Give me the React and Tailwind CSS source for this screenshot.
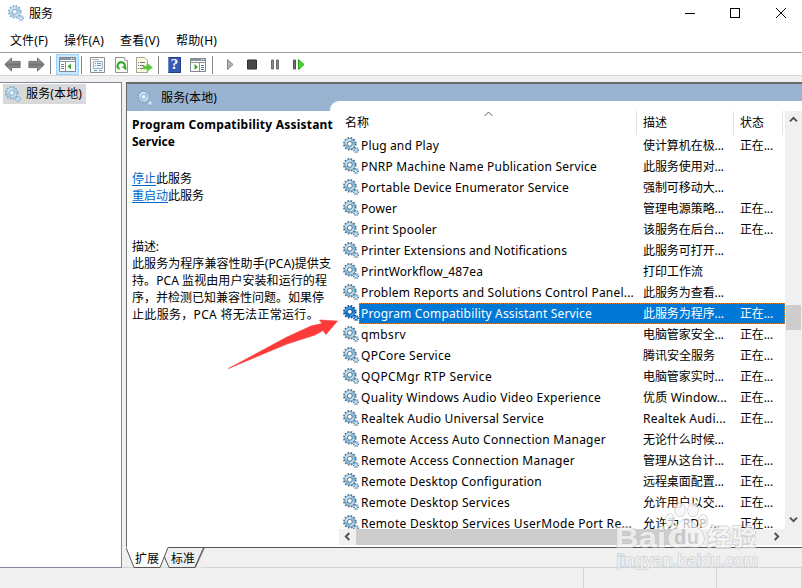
import { useLayoutEffect, useRef, useState } from "react";

// Text whose tracking is adjusted so that the run takes the given width.
function Fit({ w, children, className = "" }) {
  const ref = useRef(null);
  const [spacing, setSpacing] = useState(0);
  useLayoutEffect(() => {
    const natural = ref.current.getBoundingClientRect().width;
    setSpacing((w - natural) / String(children).length);
  }, [w, children]);
  return (
    <span ref={ref} className={`inline-block shrink-0 whitespace-pre ${className}`} style={{ letterSpacing: spacing }}>
      {children}
    </span>
  );
}

function Gear({ selected = false, pale = false }) {
  const main = selected ? "#1c78cc" : pale ? "#a9cfe8" : "#8dbbd9";
  const edge = selected ? "#0a4f94" : pale ? "#7fa9c6" : "#4f7690";
  const light = selected ? "#3f9be6" : pale ? "#cfe5f4" : "#c6e2f3";
  return (
    <svg width="16" height="16" viewBox="0 0 16 16" className="block shrink-0">
      <circle cx="6.8" cy="6.8" r="5.9" fill="none" stroke={edge} strokeWidth="1.8" strokeDasharray="1.7 1.39" />
      <circle cx="6.8" cy="6.8" r="5.2" fill={main} stroke={edge} strokeWidth={pale ? 0.3 : 0.5} />
      <path d="M2.9 6.8a3.9 3.9 0 0 1 5.2-3.6" fill="none" stroke={light} strokeWidth="2" />
      <path d="M10.6 7.6a3.9 3.9 0 0 1-3.4 3" fill="none" stroke={light} strokeWidth="1.4" />
      <circle cx="6.8" cy="6.8" r="2.4" fill={pale ? "#f4f8fb" : "#fff"} stroke={edge} strokeWidth="0.9" />
      <circle cx="13" cy="13" r="2.4" fill="none" stroke={edge} strokeWidth="1.3" strokeDasharray="1 0.88" />
      <circle cx="13" cy="13" r="1.5" fill="#fff" stroke={main} strokeWidth="1.3" />
    </svg>
  );
}

const Sep = ({ className = "" }) => <div className={`h-[18px] w-px shrink-0 bg-[#858585] ${className}`} />;

function BackArrow({ flip = false }) {
  return (
    <svg width="17" height="15" viewBox="0 0 17 15" className={flip ? "-scale-x-100" : ""}>
      <defs>
        <linearGradient id="arrowFill" x1="0" y1="0" x2="0" y2="1">
          <stop offset="0" stopColor="#b2b2b2" />
          <stop offset="0.5" stopColor="#747474" />
          <stop offset="1" stopColor="#a4a4a4" />
        </linearGradient>
      </defs>
      <path d="M0.8 7.5 7.5 1v3.4h8.6v6.2H7.5V14z" fill="url(#arrowFill)" stroke="#707070" strokeLinejoin="round" />
    </svg>
  );
}

function TreeIcon() {
  return (
    <svg width="17" height="15" viewBox="0 0 17 15">
      <path d="M0.5 0.5h16v14H0.5z" fill="#fff" stroke="#7e8790" />
      <path d="M1 1h15v2H1z" fill="#8a939b" />
      <path d="M12 1.5h1M14 1.5h1" stroke="#fff" />
      <path d="M1 4.5h15M6.5 5v9" stroke="#8a939b" />
      <path d="M2 7.5h3M2 9.5h3M2 11.5h3" stroke="#5b88b4" />
      <path d="M12 6.5v6L8.5 9.5z" fill="#35ab28" />
    </svg>
  );
}

function PropsIcon() {
  return (
    <svg width="15" height="16" viewBox="0 0 15 16">
      <path d="M0.5 0.5h14v15H0.5z" fill="#fafafa" stroke="#8c8c8c" />
      <path d="M3.5 4.5h9v7h-9z" fill="#f2f6fa" stroke="#9bb0c2" />
      <path d="M2 2.5h7" stroke="#a6bac9" />
      <path d="M5 6.5h1M7 6.5h4M5 8.5h1M7 8.5h4" stroke="#7c9ebb" />
      <path d="M4 13.5h3M9 13.5h3" stroke="#49aad1" />
    </svg>
  );
}

function RefreshIcon() {
  return (
    <svg width="13" height="16" viewBox="0 0 13 16">
      <path d="M0.5 0.5h9l3 3v12h-12z" fill="#fbfbf4" stroke="#959595" />
      <path d="M9.5 0.5v3h3" fill="#fff" stroke="#b0b0b0" />
      <path d="M4.5 12A3.6 3.6 0 1 1 9.6 10" fill="none" stroke="#30a32c" strokeWidth="2" />
      <path d="M6.5 9.5h4.8v4z" fill="#30a32c" />
    </svg>
  );
}

function ExportIcon() {
  return (
    <svg width="17" height="16" viewBox="0 0 17 16">
      <path d="M0.5 0.5h8l3 3v12h-11z" fill="#fdf9df" stroke="#a8a48c" />
      <path d="M2 5.5h1M4 5.5h5M2 8.5h1M4 8.5h4M2 11.5h1M4 11.5h5" stroke="#68758d" />
      <path d="M7 9h4V6l5.5 4.5-5.5 4V12H7z" fill="#58c541" stroke="#7bc85d" strokeWidth="0.6" />
    </svg>
  );
}

function HelpIcon() {
  return (
    <div className="flex h-4 w-[13px] items-center justify-center border border-[#233f8d] border-l-[#7189c9] bg-[#3659b4] font-['Liberation_Serif',serif] text-[15px] leading-none font-bold text-white">
      ?
    </div>
  );
}

function ActionIcon() {
  return (
    <svg width="16" height="14" viewBox="0 0 16 14">
      <path d="M0.5 0.5h15v13H0.5z" fill="#fff" stroke="#7e8790" />
      <path d="M1 1h14v2H1z" fill="#8a939b" />
      <path d="M11 1.5h1M13 1.5h1" stroke="#fff" />
      <path d="M1 4.5h14M9.5 5v8" stroke="#8a939b" />
      <path d="M11 7.5h3M11 9.5h3M11 11.5h3" stroke="#4b82b9" />
      <path d="M4.5 6v6L8 9z" fill="#35ab28" />
    </svg>
  );
}

const services = [
  ["Plug and Play", 78, "使计算机在极...", 1],
  ["PNRP Machine Name Publication Service", 236, "此服务使用对...", 0],
  ["Portable Device Enumerator Service", 208, "强制可移动大...", 0],
  ["Power", 36, "管理电源策略...", 1],
  ["Print Spooler", 76, "该服务在后台...", 1],
  ["Printer Extensions and Notifications", 206, "此服务可打开...", 0],
  ["PrintWorkflow_487ea", 122, "打印工作流", 0],
  ["Problem Reports and Solutions Control Panel...", 273, "此服务为查看...", 0],
  ["Program Compatibility Assistant Service", 231, "此服务为程序...", 1],
  ["qmbsrv", 45, "电脑管家安全...", 1],
  ["QPCore Service", 90, "腾讯安全服务", 1],
  ["QQPCMgr RTP Service", 131, "电脑管家实时...", 1],
  ["Quality Windows Audio Video Experience", 240, "优质 Window...", 1],
  ["Realtek Audio Universal Service", 183, "Realtek Audi...", 1],
  ["Remote Access Auto Connection Manager", 245, "无论什么时候...", 0],
  ["Remote Access Connection Manager", 214, "管理从这台计...", 1],
  ["Remote Desktop Configuration", 181, "远程桌面配置...", 1],
  ["Remote Desktop Services", 149, "允许用户以交...", 1],
  ["Remote Desktop Services UserMode Port Re...", 271, "允许为 RDP ...", 1],
];

const descWidth = (text) => {
  if (text === "腾讯安全服务") return 72;
  if (text === "打印工作流") return 60;
  if (text.startsWith("优质")) return 84;
  if (text.startsWith("Realtek")) return 83;
  if (text.startsWith("允许为")) return 77;
  return 81;
};

function Row({ item, selected }) {
  const [name, width, desc, running] = item;
  return (
    <div className={`flex h-[21px] shrink-0 items-center pl-[4px] ${selected ? "text-white" : ""}`}>
      <div className="w-4 pb-px"><Gear selected={selected} /></div>
      <div className={`flex h-[21px] w-[426px] items-center ${selected ? "border border-dotted border-[#e08030] bg-[#0078d7] pl-px" : "pl-[2px]"}`}>
        <div className="w-[282px] leading-[19px]"><Fit w={width}>{name}</Fit></div>
        <div className="w-[97px] leading-[19px]"><Fit w={descWidth(desc)}>{desc}</Fit></div>
        {running ? <div className="leading-[19px]"><Fit w={33}>正在...</Fit></div> : null}
      </div>
    </div>
  );
}

function Chevron({ className }) {
  return (
    <svg width="9" height="9" viewBox="0 0 9 9" className={className}>
      <path d="M1 6.3 4.5 2.8 8 6.3" fill="none" stroke="#505050" strokeWidth="1.9" />
    </svg>
  );
}

function Tabs() {
  return (
    <div className="relative h-[22px]">
      <svg width="676" height="22" viewBox="0 0 676 22" className="absolute inset-0">
        <path d="M42 0.5h634" stroke="#555" />
        <path d="M42 1 38 10 43 20.5h33L77 1z" fill="#f0f0f0" />
        <path d="M77 1h2l-9 19.5h-2z" fill="#a0a0a0" />
        <path d="M38.5 10 43 20.5h26L77.5 1" fill="none" stroke="#555" />
        <path d="M0 0 8 20.5h26L42 0z" fill="#fff" />
        <path d="M0 0.5 8 20.5h26L42 0.5" fill="none" stroke="#555" />
      </svg>
      <div className="relative flex gap-3 pt-[3px] pl-[9px] leading-[18px]">
        <Fit w={24}>扩展</Fit>
        <Fit w={24}>标准</Fit>
      </div>
    </div>
  );
}

function Watermark() {
  return (
    <div className="pointer-events-none absolute top-[500px] left-[612px] h-[76px] w-[155px] opacity-75">
      <svg width="155" height="76" viewBox="0 0 155 76">
        <g fill="#f6f6f6" stroke="#c6c6c6" strokeWidth="1.6" style={{ paintOrder: "stroke" }}>
          <ellipse cx="58" cy="20" rx="4.5" ry="6" />
          <ellipse cx="68" cy="10" rx="5" ry="6.5" />
          <ellipse cx="81" cy="10" rx="5" ry="6.5" />
          <ellipse cx="91" cy="21" rx="4.5" ry="6" />
          <path d="M74 19c-5 0-7 6-12 10-9 7-6 18 2 18 5 0 14-1 20 0 9 0 11-11 3-18-5-4-7-10-13-10z" />
          <text x="3" y="47" fontSize="28" fontWeight="700" fontFamily="Liberation Sans, sans-serif" textLength="51" lengthAdjust="spacingAndGlyphs">Bai</text>
          <text x="95" y="46" fontSize="24" fontWeight="700" fontFamily="Noto Sans CJK SC, sans-serif" textLength="49">经验</text>
          <text x="5" y="66" fontSize="17" fontFamily="Liberation Sans, sans-serif" textLength="141">jingyan.baidu.com</text>
        </g>
        <text x="62" y="44" fontSize="20" fontWeight="700" fill="#c4c4c4" fontFamily="Liberation Sans, sans-serif" textLength="25">du</text>
      </svg>
    </div>
  );
}

export default function App() {
  return (
    <div className="relative flex h-[588px] w-[802px] flex-col overflow-hidden bg-[#f0f0f0] font-['Noto_Sans','Noto_Sans_CJK_SC',sans-serif] text-[12px] leading-[17px] text-black">
      <header className="flex h-7 shrink-0 items-center bg-white pb-[2px] pl-2">
        <Gear pale />
        <Fit w={24} className="ml-[5px]">服务</Fit>
        <svg width="120" height="16" viewBox="0 0 120 16" className="ml-auto" shapeRendering="crispEdges">
          <path d="M3 8.5h10" stroke="#000" />
          <path d="M48.5 3.5h9v9h-9z" fill="none" stroke="#000" />
          <path d="m94 3 10 10m0-10L94 13" stroke="#000" shapeRendering="auto" />
        </svg>
      </header>
      <nav className="flex h-6 shrink-0 items-center bg-white pl-[10px]">
        <div className="w-[54px]"><Fit w={38}>文件(F)</Fit></div>
        <div className="w-[56px]"><Fit w={40}>操作(A)</Fit></div>
        <div className="w-[56px]"><Fit w={40}>查看(V)</Fit></div>
        <Fit w={41}>帮助(H)</Fit>
      </nav>
      <div className="flex h-6 shrink-0 items-center border-t border-b border-t-[#a0a0a0] border-b-[#d5d5d5] bg-white pt-px pl-1">
        <BackArrow />
        <div className="w-[7px]" />
        <BackArrow flip />
        <Sep className="ml-[5px]" />
        <div className="ml-[5px] flex h-[21px] w-[23px] items-center justify-center border border-[#99d1ff] bg-[#cce8ff]"><TreeIcon /></div>
        <Sep className="ml-[2px]" />
        <div className="ml-2"><PropsIcon /></div>
        <div className="ml-[10px]"><RefreshIcon /></div>
        <div className="ml-[8px]"><ExportIcon /></div>
        <Sep className="ml-[5px]" />
        <div className="ml-[9px]"><HelpIcon /></div>
        <div className="ml-[9px]"><ActionIcon /></div>
        <Sep className="ml-[6px]" />
        <svg width="100" height="15" viewBox="0 0 100 15" className="ml-[7px]">
          <path d="M7.5 2.5v10L13 7.5z" fill="#b4b4b4" stroke="#858585" />
          <path d="M27.5 3h9v9h-9z" fill="#484848" stroke="#2d2d2d" />
          <path d="M51.5 3h2v9h-2zM56.5 3h2v9h-2z" fill="#888" stroke="#6c6c6c" />
          <path d="M73.5 3h2v9h-2z" fill="#777" stroke="#505050" />
          <path d="M78.5 2.5v10l5.5-5z" fill="#49d52c" stroke="#28a51c" />
        </svg>
      </div>
      <main className="flex h-[492px] shrink-0 border-b border-[#d4d4d4] pt-[6px]">
        <aside className="h-[486px] w-[122px] shrink-0 border border-l-0 border-[#82879a] bg-white">
          <div className="mt-[1px] ml-[3px] flex h-5 w-[83px] items-center bg-[#d9d9d9] pb-px pl-[2px]">
            <Gear pale />
            <Fit w={56} className="ml-[5px]">服务(本地)</Fit>
          </div>
        </aside>
        <section className="ml-1 flex min-w-0 flex-1 flex-col">
          <div className="flex h-[465px] shrink-0 flex-col border-t-2 border-l border-[#696969] bg-white">
            <div className="flex h-[27px] shrink-0 bg-[#99b4d1]">
              <div className="flex w-[203px] items-center pl-[10px]">
                <Gear pale />
                <Fit w={56} className="ml-[8px]">服务(本地)</Fit>
              </div>
              <div className="mt-[17px] flex-1 rounded-tl-[9px] bg-white" />
            </div>
            <div className="flex min-h-0 flex-1">
              <div className="w-[212px] shrink-0 pt-[5px] pl-[5px]">
                <div className="font-bold">
                  <Fit w={201}>Program Compatibility Assistant</Fit>
                  <div><Fit w={43}>Service</Fit></div>
                </div>
                <div className="mt-5"><Fit w={24} className="text-[#0066cc] underline underline-offset-2">停止</Fit><Fit w={36}>此服务</Fit></div>
                <div><Fit w={36} className="text-[#0066cc] underline underline-offset-2">重启动</Fit><Fit w={36}>此服务</Fit></div>
                <div className="mt-[34px]"><Fit w={27}>描述:</Fit></div>
                <div><Fit w={199}>此服务为程序兼容性助手(PCA)提供支</Fit></div>
                <div><Fit w={195}>持。PCA 监视由用户安装和运行的程</Fit></div>
                <div><Fit w={192}>序，并检测已知兼容性问题。如果停</Fit></div>
                <div><Fit w={187}>止此服务，PCA 将无法正常运行。</Fit></div>
              </div>
              <div className="flex min-w-0 flex-1 flex-col">
                <div className="flex h-[418px] shrink-0">
                  <div className="flex w-[446px] shrink-0 flex-col overflow-hidden">
                    <div className="flex h-6 shrink-0 items-center">
                      <div className="flex h-6 w-[298px] border-r border-[#e2e2e2] pt-[3px] pl-[6px]">
                        <Fit w={24}>名称</Fit>
                        <svg width="9" height="6" viewBox="0 0 9 6" className="-mt-[3px] ml-[115px]"><path d="M0.5 5 4.5 1l4 4" fill="none" stroke="#606060" /></svg>
                      </div>
                      <div className="h-6 w-[97px] border-r border-[#e2e2e2] pt-[3px] pl-[6px]"><Fit w={24}>描述</Fit></div>
                      <div className="h-6 w-[49px] border-r border-[#e2e2e2] pt-[3px] pl-[6px]"><Fit w={24}>状态</Fit></div>
                    </div>
                    <div className="flex flex-col">
                      {services.map((item, i) => <Row key={item[0]} item={item} selected={i === 8} />)}
                    </div>
                  </div>
                  <div className="flex w-[17px] flex-col items-center bg-[#f0f0f0]">
                    <Chevron className="mt-[4px]" />
                    <div className="mt-[181px] h-[25px] w-[15px] bg-[#cdcdcd]" />
                    <Chevron className="mt-auto mb-[5px] rotate-180" />
                  </div>
                </div>
                <div className="flex h-4 shrink-0 items-center bg-[#f0f0f0] pb-px">
                  <Chevron className="ml-[4px] -rotate-90" />
                  <div className="ml-[4px] -mb-px h-4 w-[330px] bg-[#cdcdcd]" />
                  <Chevron className="mr-[21px] ml-auto rotate-90" />
                </div>
              </div>
            </div>
          </div>
          <Tabs />
        </section>
      </main>
      <footer className="flex flex-1">
        <div className="w-[584px] border-r border-[#d4d4d4]" />
        <div className="w-[133px] border-r border-[#d4d4d4]" />
        <div className="flex-1 border-r border-[#d4d4d4]" />
      </footer>
      <svg width="112" height="54" viewBox="0 0 112 54" className="absolute top-[317px] left-[227px]">
        <path d="M1.5 51.5 60 20 84 9 95 6.5 92.5 3 110.5 4 99 17.5 96 13.5 88 18 60 27z" fill="#fc3a3a" stroke="#fc3a3a" strokeWidth="0.6" strokeLinejoin="round" />
      </svg>
      <Watermark />
    </div>
  );
}
